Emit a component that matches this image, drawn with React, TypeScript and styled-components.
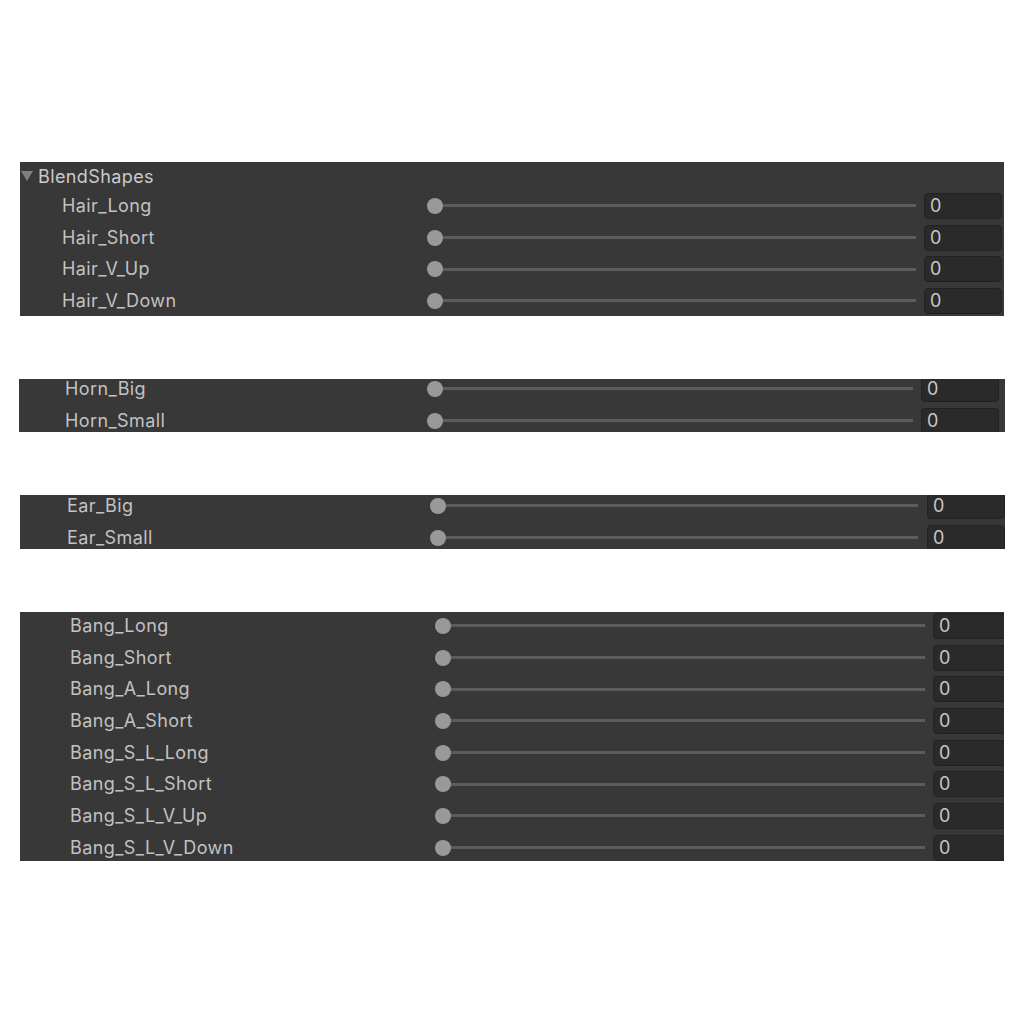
import React from "react";
import styled, { createGlobalStyle } from "styled-components";

const GlobalStyle = createGlobalStyle`
  html, body {
    margin: 0;
    padding: 0;
    background: #ffffff;
  }
  body {
    font-family: Inter, "Noto Sans", "Liberation Sans", sans-serif;
  }
`;

type Group = {
  id: string;
  header?: string;
  top: number;
  left: number;
  width: number;
  height: number;
  offset: number;
  indent: number;
  labelW: number;
  sliderW: number;
  gap: number;
  items: string[];
};

const groups: Group[] = [
  {
    id: "hair",
    header: "BlendShapes",
    top: 162,
    left: 20,
    width: 984,
    height: 154,
    offset: 0,
    indent: 42,
    labelW: 365,
    sliderW: 489,
    gap: 8,
    items: ["Hair_Long", "Hair_Short", "Hair_V_Up", "Hair_V_Down"],
  },
  {
    id: "horn",
    top: 63,
    left: 19,
    width: 986,
    height: 53,
    offset: -6,
    indent: 46,
    labelW: 362,
    sliderW: 486,
    gap: 8,
    items: ["Horn_Big", "Horn_Small"],
  },
  {
    id: "ear",
    top: 63,
    left: 20,
    width: 985,
    height: 54,
    offset: -5,
    indent: 47,
    labelW: 363,
    sliderW: 488,
    gap: 9,
    items: ["Ear_Big", "Ear_Small"],
  },
  {
    id: "bang",
    top: 63,
    left: 20,
    width: 984,
    height: 249,
    offset: -2,
    indent: 50,
    labelW: 365,
    sliderW: 490,
    gap: 8,
    items: [
      "Bang_Long",
      "Bang_Short",
      "Bang_A_Long",
      "Bang_A_Short",
      "Bang_S_L_Long",
      "Bang_S_L_Short",
      "Bang_S_L_V_Up",
      "Bang_S_L_V_Down",
    ],
  },
];

const Page = styled.div`
  display: flex;
  flex-direction: column;
  min-height: 1024px;
`;

const Panel = styled.section<{ $top: number; $left: number; $width: number; $height: number }>`
  margin-top: ${(p) => p.$top}px;
  margin-left: ${(p) => p.$left}px;
  width: ${(p) => p.$width}px;
  height: ${(p) => p.$height}px;
  background: #383838;
  overflow: hidden;
  color: #c2c2c2;
  font-size: 18px;
  letter-spacing: 0.4px;
`;

const List = styled.div<{ $offset: number }>`
  display: flex;
  flex-direction: column;
  margin-top: ${(p) => p.$offset}px;
`;

const Header = styled.div`
  display: flex;
  align-items: center;
  gap: 5px;
  height: 28px;
  padding-left: 1px;
  color: #cbcbcb;
`;

const Foldout = styled.svg`
  width: 12px;
  height: 10px;
  flex: none;
`;

const Row = styled.div<{ $indent: number; $labelW: number; $sliderW: number; $gap: number }>`
  display: grid;
  grid-template-columns: ${(p) => p.$labelW}px ${(p) => p.$sliderW}px 78px;
  align-items: center;
  height: 31.7px;
  padding-left: ${(p) => p.$indent}px;

  & > :last-child {
    margin-left: ${(p) => p.$gap}px;
  }
`;

const Label = styled.span`
  white-space: nowrap;
  line-height: 1;
`;

const Slider = styled.div`
  position: relative;
  height: 18px;
  display: flex;
  align-items: center;
`;

const Track = styled.div`
  flex: 1;
  margin-left: 8px;
  height: 3px;
  background: #5c5c5c;
`;

const Knob = styled.div`
  position: absolute;
  top: 50%;
  width: 16px;
  height: 16px;
  margin-top: -8px;
  border-radius: 50%;
  background: #999999;
`;

const Field = styled.div`
  box-sizing: border-box;
  width: 78px;
  height: 26px;
  display: flex;
  align-items: center;
  padding-left: 5px;
  background: #2a2a2a;
  border: 1px solid #222222;
  border-radius: 4px;
  color: #c6c6c6;
  line-height: 1;
`;

function BlendSlider({ value, width }: { value: number; width: number }) {
  const knobLeft = (value / 100) * (width - 16);
  return (
    <Slider>
      <Track />
      <Knob style={{ left: knobLeft }} />
    </Slider>
  );
}

export default function App() {
  return (
    <Page>
      <GlobalStyle />
      {groups.map((g) => (
        <Panel key={g.id} $top={g.top} $left={g.left} $width={g.width} $height={g.height}>
          <List $offset={g.offset}>
            {g.header && (
              <Header>
                <Foldout viewBox="0 0 12 10">
                  <path d="M0 0 L12 0 L6 10 Z" fill="#808080" />
                </Foldout>
                <span>{g.header}</span>
              </Header>
            )}
            {g.items.map((name) => (
              <Row key={name} $indent={g.indent} $labelW={g.labelW} $sliderW={g.sliderW} $gap={g.gap}>
                <Label>{name}</Label>
                <BlendSlider value={0} width={g.sliderW} />
                <Field>0</Field>
              </Row>
            ))}
          </List>
        </Panel>
      ))}
    </Page>
  );
}
